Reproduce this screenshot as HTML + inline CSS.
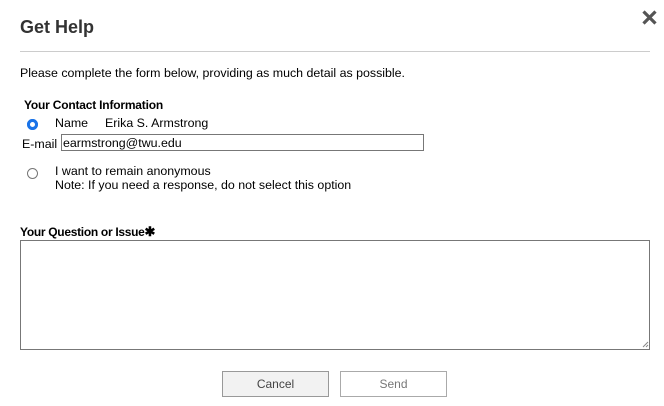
<!DOCTYPE html>
<html><head><style>
body{margin:0;width:664px;height:406px;background:#fff;font-family:"Liberation Sans",sans-serif;color:#000;position:relative;overflow:hidden}
.a{position:absolute;white-space:nowrap}
.t{font-size:12.4px}
.radio{position:absolute;width:11px;height:11px;border-radius:50%;box-sizing:border-box}
</style></head><body>
<div class="a" style="left:20px;top:17px;font-size:18px;font-weight:bold;color:#333">Get Help</div>
<svg class="a" style="left:641px;top:9px" width="17" height="17" viewBox="0 0 17 17"><path d="M2.5 2.5L14.5 14.5M14.5 2.5L2.5 14.5" stroke="#555" stroke-width="3.2"/></svg>
<div class="a" style="left:20px;top:51px;width:630px;height:1px;background:#ccc"></div>
<div class="a t" style="left:20px;top:66px">Please complete the form below, providing as much detail as possible.</div>
<div class="a" style="left:24px;top:98px;font-size:12px;font-weight:bold;letter-spacing:-0.2px">Your Contact Information</div>
<div class="radio" style="left:27px;top:119px;border:3px solid #1a73e8;background:#fff"></div>
<div class="radio" style="left:27px;top:119px;border:1px solid #1a73e8;"></div>
<div class="a t" style="left:55px;top:116px">Name</div>
<div class="a t" style="left:105px;top:116px">Erika S. Armstrong</div>
<div class="a t" style="left:22px;top:137px">E-mail</div>
<div class="a" style="left:61px;top:134px;width:363px;height:17px;box-sizing:border-box;border:1px solid #777"></div>
<div class="a t" style="left:63px;top:136px">earmstrong@twu.edu</div>
<div class="radio" style="left:27px;top:168px;border:1px solid #767676"></div>
<div class="a t" style="left:55px;top:164px">I want to remain anonymous</div>
<div class="a t" style="left:55px;top:178px">Note: If you need a response, do not select this option</div>
<div class="a" style="left:20px;top:224px;font-size:12px;font-weight:bold;letter-spacing:-0.3px">Your Question or Issue<span style="font-size:13px">✱</span></div>
<div class="a" style="left:20px;top:240px;width:630px;height:110px;box-sizing:border-box;border:1px solid #777"></div>
<svg class="a" style="left:642px;top:341px" width="7" height="7"><path d="M6 1L1 6M6 4L4 6" stroke="#888"/></svg>
<div class="a" style="left:222px;top:371px;width:107px;height:26px;box-sizing:border-box;border:1px solid #999;background:#f2f2f2;font-size:12px;text-align:center;line-height:24px;color:#444">Cancel</div>
<div class="a" style="left:340px;top:371px;width:107px;height:26px;box-sizing:border-box;border:1px solid #aaa;background:#fff;font-size:12px;text-align:center;line-height:24px;color:#777">Send</div>
</body></html>
